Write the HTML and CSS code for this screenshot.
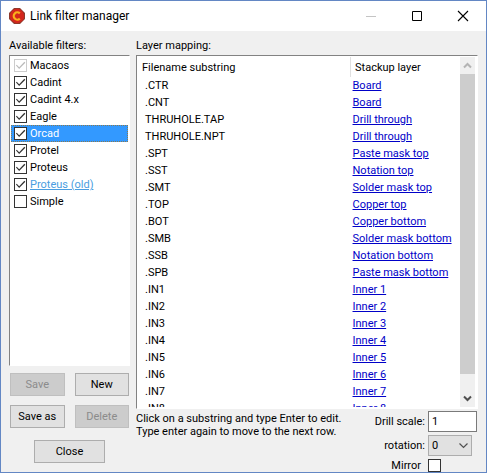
FILE: index.html
```html
<!DOCTYPE html>
<html lang="en">
<head>
<meta charset="utf-8">
<title>Link filter manager</title>
<link rel="stylesheet" href="styles.css">
</head>
<body>
<div class="window">
  <header class="titlebar">
    <svg class="logo" viewBox="0 0 16 16" aria-hidden="true">
      <path d="M5 0h6l5 5v6l-5 5H5l-5-5V5z" fill="#8c3a2c"/>
      <circle cx="8" cy="8" r="7.2" fill="#d3261c"/>
      <path d="M10.800 5.400A3.600 3.600 0 1 0 10.800 10.600" fill="none" stroke="#f8b01c" stroke-width="2.200"/>
    </svg>
    <h1 class="title">Link filter manager</h1>
    <div class="controls">
      <button class="control" aria-label="Minimize" disabled><svg viewBox="0 0 12 12"><path d="M1 6.500h10" stroke="#c4c4c4"/></svg></button>
      <button class="control" aria-label="Maximize"><svg viewBox="0 0 12 12"><path d="M1.500 1.500h9v9h-9z" fill="none" stroke="#000"/></svg></button>
      <button class="control" aria-label="Close window"><svg viewBox="0 0 12 12"><path d="M1 1l10 10M11 1L1 11" stroke="#000" stroke-width="1.100"/></svg></button>
    </div>
  </header>
  <main class="content">
    <section class="filters">
      <h2 class="label">Available filters:</h2>
      <div class="box filter-list">
        <label class="filter"><input class="check" type="checkbox" checked disabled><span>Macaos</span></label>
        <label class="filter"><input class="check" type="checkbox" checked><span>Cadint</span></label>
        <label class="filter"><input class="check" type="checkbox" checked><span>Cadint 4.x</span></label>
        <label class="filter"><input class="check" type="checkbox" checked><span>Eagle</span></label>
        <label class="filter selected"><input class="check" type="checkbox" checked><span>Orcad</span></label>
        <label class="filter"><input class="check" type="checkbox" checked><span>Protel</span></label>
        <label class="filter"><input class="check" type="checkbox" checked><span>Proteus</span></label>
        <label class="filter hot"><input class="check" type="checkbox" checked><span>Proteus (old)</span></label>
        <label class="filter"><input class="check" type="checkbox"><span>Simple</span></label>
      </div>
      <div class="buttons">
        <button class="button" disabled>Save</button>
        <button class="button">New</button>
        <button class="button">Save as</button>
        <button class="button" disabled>Delete</button>
      </div>
      <button class="button close">Close</button>
    </section>
    <section class="mapping">
      <h2 class="label">Layer mapping:</h2>
      <div class="box map-box">
        <div class="map-scroll">
          <table class="map">
            <thead><tr><th>Filename substring</th><th>Stackup layer</th></tr></thead>
            <tbody>
              <tr><td>.CTR</td><td><a href="#">Board</a></td></tr>
              <tr><td>.CNT</td><td><a href="#">Board</a></td></tr>
              <tr><td>THRUHOLE.TAP</td><td><a href="#">Drill through</a></td></tr>
              <tr><td>THRUHOLE.NPT</td><td><a href="#">Drill through</a></td></tr>
              <tr><td>.SPT</td><td><a href="#">Paste mask top</a></td></tr>
              <tr><td>.SST</td><td><a href="#">Notation top</a></td></tr>
              <tr><td>.SMT</td><td><a href="#">Solder mask top</a></td></tr>
              <tr><td>.TOP</td><td><a href="#">Copper top</a></td></tr>
              <tr><td>.BOT</td><td><a href="#">Copper bottom</a></td></tr>
              <tr><td>.SMB</td><td><a href="#">Solder mask bottom</a></td></tr>
              <tr><td>.SSB</td><td><a href="#">Notation bottom</a></td></tr>
              <tr><td>.SPB</td><td><a href="#">Paste mask bottom</a></td></tr>
              <tr><td>.IN1</td><td><a href="#">Inner 1</a></td></tr>
              <tr><td>.IN2</td><td><a href="#">Inner 2</a></td></tr>
              <tr><td>.IN3</td><td><a href="#">Inner 3</a></td></tr>
              <tr><td>.IN4</td><td><a href="#">Inner 4</a></td></tr>
              <tr><td>.IN5</td><td><a href="#">Inner 5</a></td></tr>
              <tr><td>.IN6</td><td><a href="#">Inner 6</a></td></tr>
              <tr><td>.IN7</td><td><a href="#">Inner 7</a></td></tr>
              <tr><td>.IN8</td><td><a href="#">Inner 8</a></td></tr>
            </tbody>
          </table>
        </div>
        <div class="scrollbar">
          <button class="arrow" aria-label="Scroll up"><svg viewBox="0 0 9 7"><path d="M1 5.500l3.500-3.500 3.500 3.500" fill="none" stroke="#b4b4b4" stroke-width="2"/></svg></button>
          <div class="track"><div class="thumb"></div></div>
          <button class="arrow" aria-label="Scroll down"><svg viewBox="0 0 9 7"><path d="M1 1.500l3.500 3.500 3.500-3.500" fill="none" stroke="#505050" stroke-width="2"/></svg></button>
        </div>
      </div>
      <div class="footer">
        <p class="hint">Click on a substring and type Enter to edit.<br>Type enter again to move to the next row.</p>
        <div class="settings">
          <label for="scale">Drill scale:</label>
          <input class="field" id="scale" type="text" value="1">
          <label for="rotation">rotation:</label>
          <div class="picker">
            <select class="select" id="rotation"><option>0</option><option>90</option><option>180</option><option>270</option></select>
            <svg class="chevron" viewBox="0 0 9 6" aria-hidden="true"><path d="M.5 .5l4 4 4-4" fill="none" stroke="#505050" stroke-width="1.200"/></svg>
          </div>
          <label class="mirror" for="mirror">Mirror</label>
          <input class="check" id="mirror" type="checkbox">
        </div>
      </div>
    </section>
  </main>
</div>
</body>
</html>
```
FILE: styles.css
```css
* {
  box-sizing: border-box;
}

body {
  margin: 0;
  font: 11px/13px Roboto, "Liberation Sans", sans-serif;
  color: #000;
}

button,
input,
select {
  font: inherit;
  color: inherit;
  margin: 0;
  padding: 0;
  border-radius: 0;
}

.window {
  display: flex;
  flex-direction: column;
  height: 100vh;
  border: 1px solid #6387c4;
  background: #f0f0f0;
}

.titlebar {
  display: flex;
  align-items: center;
  height: 30px;
  padding-left: 8px;
  background: #fff;
}

.logo {
  width: 16px;
  height: 16px;
}

.title {
  flex: 1;
  margin: 0 0 0 5px;
  font: 12px/16px Roboto, "Noto Sans", sans-serif;
}

.controls {
  display: flex;
}

.control {
  display: grid;
  place-items: center;
  width: 46px;
  height: 30px;
  border: 0;
  background: none;
}

.control svg {
  width: 12px;
  height: 12px;
}

.content {
  display: flex;
  flex: 1;
  gap: 6px;
  min-height: 0;
  padding: 8px 8px 0;
}

.filters,
.mapping {
  display: flex;
  flex-direction: column;
  min-height: 0;
}

.filters {
  width: 121px;
  padding-bottom: 9px;
}

.mapping {
  flex: 1;
  min-width: 0;
}

.label {
  margin: 0 0 3px;
  font-size: 11px;
  line-height: 13px;
  font-weight: normal;
}

.box {
  flex: 1;
  min-height: 0;
  border: 1px solid #828282;
  border-right-color: #fff;
  border-bottom-color: #fff;
  background: #fff;
}

.filter-list {
  padding: 1px;
}

.filter {
  display: flex;
  align-items: center;
  gap: 3px;
  height: 17px;
  padding-left: 3px;
}

.selected {
  color: #fff;
  background: #3399ff;
  outline: 1px dotted #8a7a50;
  outline-offset: -1px;
}

.hot {
  color: #4a9de0;
  text-decoration: underline;
}

.check {
  appearance: none;
  width: 13px;
  height: 13px;
  border: 1px solid #333;
  background: #fff;
}

.check:checked::before {
  content: "";
  display: block;
  width: 11px;
  height: 11px;
  background: #333;
  clip-path: polygon(9% 50%, 16% 43%, 38% 65%, 85% 17%, 94% 26%, 38% 82%);
}

.check:disabled {
  border-color: #ccc;
}

.check:disabled::before {
  background: #bbb;
}

.buttons {
  display: grid;
  grid-template-columns: 1fr 1fr;
  gap: 9px 10px;
  padding: 7px 1px 12px;
}

.button {
  height: 23px;
  border: 1px solid #adadad;
  background: #e1e1e1;
}

.button:disabled {
  border-color: #bfbfbf;
  background: #ccc;
  color: #8b8b8b;
}

.close {
  align-self: center;
  width: 71px;
}

.map-box {
  display: flex;
  padding: 1px 2px 1px 1px;
}

.map-scroll {
  flex: 1;
  overflow: hidden;
}

.map {
  width: 100%;
  table-layout: fixed;
  border-collapse: collapse;
}

.map th {
  height: 20px;
  padding: 0 0 0 4px;
  font-weight: normal;
  text-align: left;
}

.map th:first-child {
  width: 66%;
  border-right: 1px solid #e0e0e0;
}

.map td {
  height: 17px;
  padding: 0 0 0 7px;
  white-space: nowrap;
}

.map td + td {
  padding-left: 2px;
}

.map a {
  color: #0000c8;
}

.scrollbar {
  display: flex;
  flex-direction: column;
  width: 15px;
  background: #f0f0f0;
}

.arrow {
  display: grid;
  place-items: center;
  height: 17px;
  border: 0;
  background: none;
}

.arrow svg {
  width: 9px;
  height: 7px;
}

.track {
  flex: 1;
}

.thumb {
  height: 95%;
  background: #cdcdcd;
}

.footer {
  display: flex;
  justify-content: space-between;
  padding: 2px 1px 0 0;
}

.hint {
  margin: 1px 0 0;
  white-space: nowrap;
}

.settings {
  display: grid;
  grid-template-columns: auto 49px;
  align-items: center;
  justify-items: end;
  gap: 3px;
}

.settings .check,
.picker {
  justify-self: start;
}

.field {
  width: 49px;
  height: 21px;
  padding: 0 3px;
  border: 1px solid #7a7a7a;
  background: #fff;
}

.picker {
  position: relative;
  width: 44px;
}

.select {
  display: block;
  appearance: none;
  width: 100%;
  height: 21px;
  padding: 0 3px;
  border: 1px solid #adadad;
  background: #e1e1e1;
}

.chevron {
  position: absolute;
  top: 8px;
  right: 4px;
  width: 9px;
  height: 6px;
  pointer-events: none;
}

.mirror {
  padding-right: 4px;
}
```
